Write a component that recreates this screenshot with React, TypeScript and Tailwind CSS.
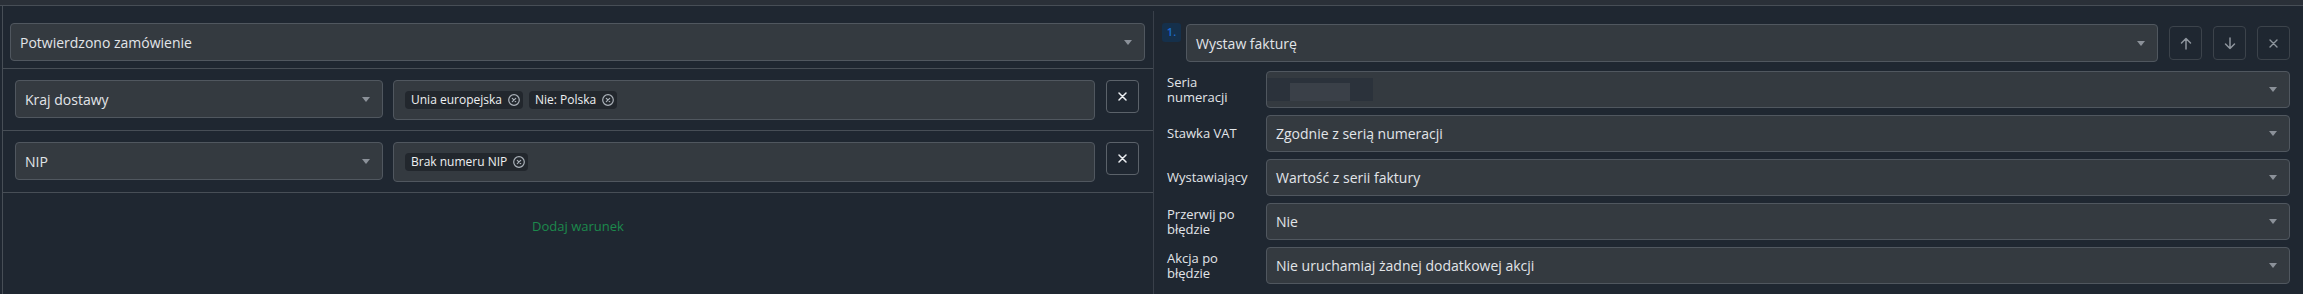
import React from "react";

function Caret() {
  return (
    <svg width="8" height="5" viewBox="0 0 8 5" className="shrink-0">
      <path d="M0 0h8L4 5z" fill="#8b9199" />
    </svg>
  );
}

function XCircle() {
  return (
    <svg width="12" height="12" viewBox="0 0 12 12" className="shrink-0">
      <circle cx="6" cy="6" r="5.3" fill="none" stroke="#aab1b9" strokeWidth="1.2" />
      <path d="M4.3 4.3l3.4 3.4M7.7 4.3l-3.4 3.4" stroke="#aab1b9" strokeWidth="1.2" strokeLinecap="round" />
    </svg>
  );
}

function Select({ text, className = "" }: { text: string; className?: string }) {
  return (
    <div
      className={`flex items-center justify-between rounded-[4px] border border-[#50575f] bg-[#343a40] pl-[9px] pr-[12px] text-[14px] text-[#e2e5e9] ${className}`}
    >
      <span>{text}</span>
      <Caret />
    </div>
  );
}

function Chip({ text }: { text: string }) {
  return (
    <div className="flex h-[18px] items-center gap-[6px] rounded-[4px] bg-[#22272d] pl-[6px] pr-[3px] text-[12px] leading-none text-[#eef0f2]">
      <span>{text}</span>
      <XCircle />
    </div>
  );
}

function CloseBtn() {
  return (
    <div className="ml-[11px] flex h-[33px] w-[33px] shrink-0 items-center justify-center rounded-[4px] border border-[#5b626a]">
      <svg width="9" height="9" viewBox="0 0 9 9">
        <path d="M1 1l7 7M8 1L1 8" stroke="#eceff2" strokeWidth="1.5" strokeLinecap="round" />
      </svg>
    </div>
  );
}

function CondRow({ sel, chips }: { sel: string; chips: string[] }) {
  return (
    <div className="flex items-start border-b border-[#474e56] pb-[10px] pl-[12px] pr-[14px] pt-[11px]">
      <Select text={sel} className="h-[38px] w-[368px] shrink-0" />
      <div className="ml-[10px] flex h-[40px] flex-1 items-center gap-[6px] rounded-[4px] border border-[#50575f] bg-[#343a40] pl-[11px]">
        {chips.map((c) => (
          <Chip key={c} text={c} />
        ))}
      </div>
      <CloseBtn />
    </div>
  );
}

function IconBtn({ children }: { children: React.ReactNode }) {
  return (
    <div className="flex h-[34px] w-[33px] items-center justify-center rounded-[4px] border border-[#3c434b]">
      {children}
    </div>
  );
}

function FieldRow({ label, children, value }: { label: React.ReactNode; children?: React.ReactNode; value?: string }) {
  return (
    <div className="flex items-center">
      <div className="w-[104px] shrink-0 pl-[5px] text-[13px] leading-[15px] text-[#e2e5e9]">{label}</div>
      <div className="flex h-[37px] flex-1 items-center justify-between rounded-[4px] border border-[#50575f] bg-[#343a40] pr-[12px] text-[14px] text-[#e2e5e9]">
        {children ? children : <span className="pl-[9px]">{value}</span>}
        <Caret />
      </div>
    </div>
  );
}

export default function App() {
  return (
    <div className="h-[294px] w-[2303px] overflow-hidden bg-[#1f2731] font-['Open_Sans','Noto_Sans',sans-serif]">
      <div className="h-[6px] border-b border-[#474e56] bg-[#2a3038]" />
      <div className="flex h-[288px]">
        {/* Left panel */}
        <div className="ml-[2px] flex w-[1151px] shrink-0 flex-col border-l border-[#474e56]">
          <div className="border-b border-[#474e56] pb-[7px] pl-[7px] pr-[8px] pt-[17px]">
            <Select text="Potwierdzono zamówienie" className="h-[38px]" />
          </div>
          <CondRow sel="Kraj dostawy" chips={["Unia europejska", "Nie: Polska"]} />
          <CondRow sel="NIP" chips={["Brak numeru NIP"]} />
          <div className="pt-[24px] text-center text-[13px] leading-[18px] text-[#1c8a4c]">Dodaj warunek</div>
        </div>

        {/* Right panel */}
        <div className="mt-[5px] flex-1 border-l border-[#39404a] pl-[8px] pr-[13px] pt-[12px]">
          <div className="flex items-start">
            <div className="flex h-[19px] w-[19px] shrink-0 items-center justify-center rounded-[3px] bg-[#15304b] text-[11px] font-semibold text-[#1a6bd0]">
              1.
            </div>
            <Select text="Wystaw fakturę" className="ml-[5px] mt-[1px] h-[38px] flex-1" />
            <div className="ml-[11px] mt-[3px] flex gap-[11px]">
              <IconBtn>
                <svg width="12" height="13" viewBox="0 0 12 13">
                  <path d="M6 12V1.5M1.5 6L6 1.5 10.5 6" fill="none" stroke="#8e959d" strokeWidth="1.5" strokeLinecap="round" strokeLinejoin="round" />
                </svg>
              </IconBtn>
              <IconBtn>
                <svg width="12" height="13" viewBox="0 0 12 13">
                  <path d="M6 1v10.5M1.5 7L6 11.5 10.5 7" fill="none" stroke="#8e959d" strokeWidth="1.5" strokeLinecap="round" strokeLinejoin="round" />
                </svg>
              </IconBtn>
              <IconBtn>
                <svg width="9" height="9" viewBox="0 0 9 9">
                  <path d="M1 1l7 7M8 1L1 8" stroke="#8e959d" strokeWidth="1.4" strokeLinecap="round" />
                </svg>
              </IconBtn>
            </div>
          </div>
          <div className="mt-[9px] flex flex-col gap-[7px]">
            <FieldRow
              label={
                <>
                  Seria
                  <br />
                  numeracji
                </>
              }
            >
              <div className="flex h-[23px] w-[106px] items-end bg-[#2b323b] blur-[0.5px]">
                <div className="ml-[23px] h-[18px] w-[60px] bg-[#3a4048]" />
              </div>
            </FieldRow>
            <FieldRow label="Stawka VAT" value="Zgodnie z serią numeracji" />
            <FieldRow label="Wystawiający" value="Wartość z serii faktury" />
            <FieldRow
              label={
                <>
                  Przerwij po
                  <br />
                  błędzie
                </>
              }
              value="Nie"
            />
            <FieldRow
              label={
                <>
                  Akcja po
                  <br />
                  błędzie
                </>
              }
              value="Nie uruchamiaj żadnej dodatkowej akcji"
            />
          </div>
        </div>
      </div>
    </div>
  );
}
